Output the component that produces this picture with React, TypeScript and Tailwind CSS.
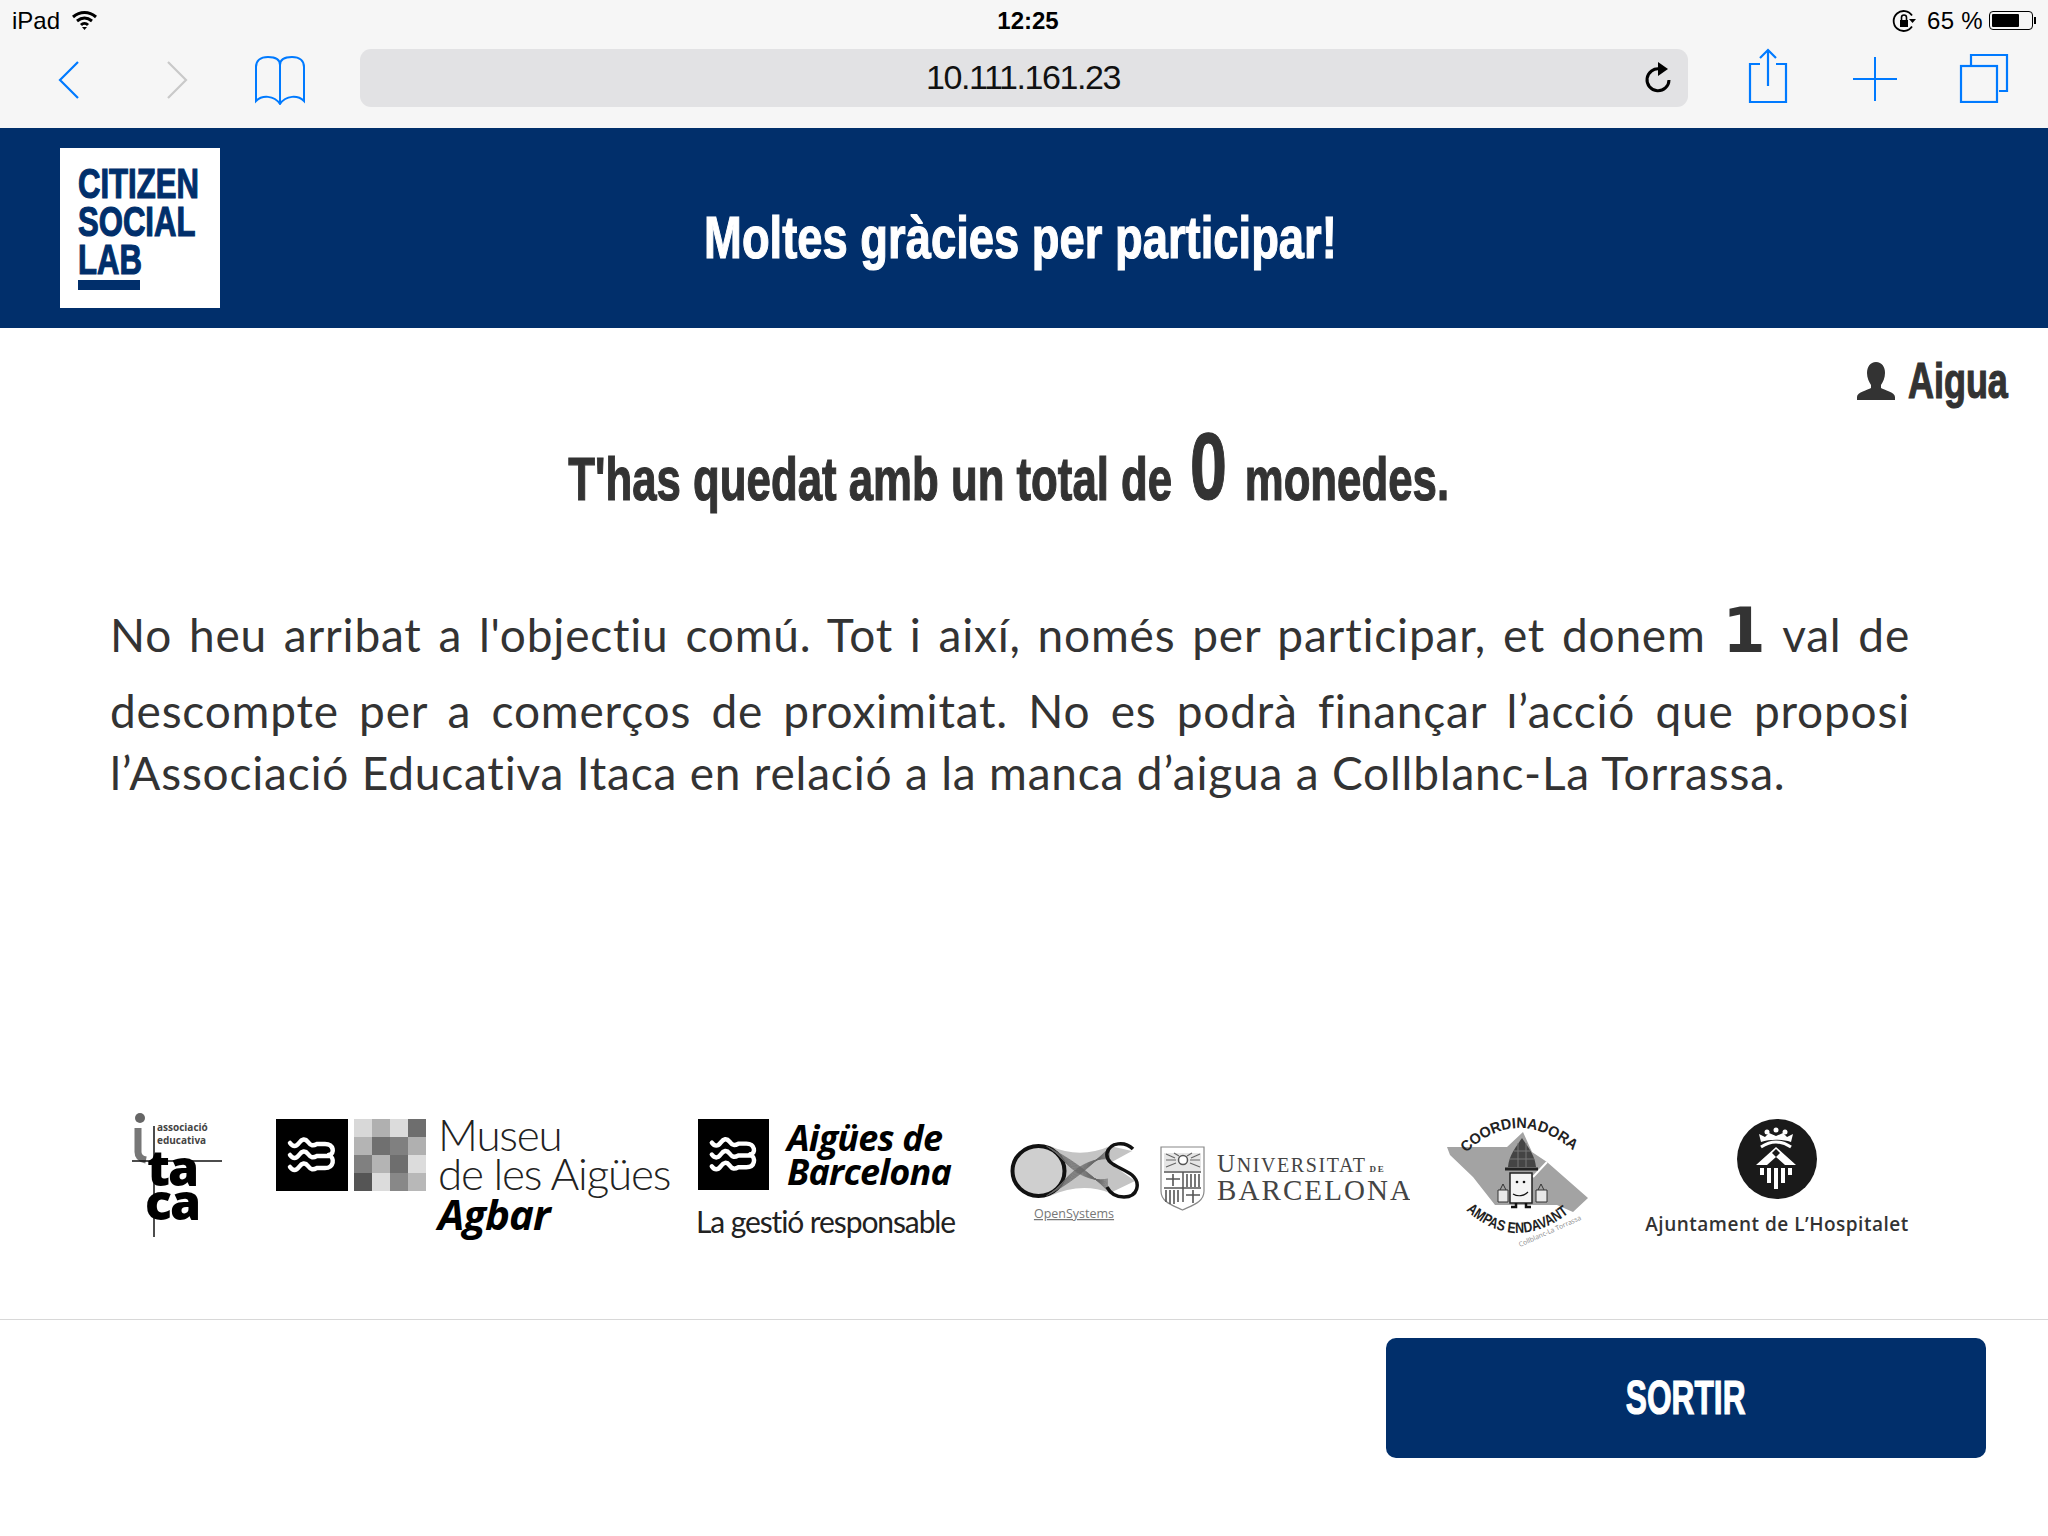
import React from "react";

const mosaic = ["#d8d8d8", "#b0b0b0", "#dcdcdc", "#6e6e6e", "#b4b4b4", "#707070", "#808080", "#b0b0b0", "#808080", "#b4b4b4", "#6e6e6e", "#dcdcdc", "#555555", "#dcdcdc", "#888888", "#b8b8b8"];

// no condensed family is installed, so the bold headings get squeezed horizontally
const heavy = "inline-block whitespace-nowrap font-['Liberation_Sans',sans-serif] font-bold [-webkit-text-stroke:1.2px_currentColor]";
const logoLine = `${heavy} origin-left scale-x-[0.74] text-[42px] leading-[38px] text-[#012f6b]`;

const meshLines = Array.from({ length: 13 }, (_, i) => i);

const WaveMark = ({ size }: { size: number }) => (
    <svg width={size} height={size} viewBox="0 0 72 72" className="bg-black shrink-0">
        <g fill="none" stroke="#fff" strokeWidth="4.500" strokeLinecap="round">
            <path d="M14 24c3 4 6 4 9 0s6-5 9-1 5 4 9 2h8c9 0 10 10 4 11" />
            <path d="M14 36c3 4 6 4 9 0s6-5 9-1 5 4 9 2h12" />
            <path d="M14 48c3 4 6 4 9 0s6-5 9-1 5 4 9 2h8c9 0 10-10 4-13" />
        </g>
    </svg>
);

const ItacaLogo = () => (
    <svg width="92" height="128" viewBox="0 0 92 128" className="shrink-0">
        <circle cx="8" cy="6" r="5" fill="#666" />
        <path d="M6 16v24c0 5 3 7 8 8" fill="none" stroke="#777" strokeWidth="7" />
        <text x="25" y="19" fontFamily="Open Sans" fontSize="10" fontWeight="700" fill="#444">associació</text>
        <text x="25" y="32" fontFamily="Open Sans" fontSize="10" fontWeight="700" fill="#444">educativa</text>
        <path d="M0 49h90" stroke="#111" strokeWidth="1.500" />
        <path d="M22 14v111" stroke="#111" strokeWidth="1.500" />
        <text x="15" y="74" fontFamily="Open Sans" fontSize="50" fontWeight="800" fill="#000" letterSpacing="-2">ta</text>
        <text x="13" y="108" fontFamily="Open Sans" fontSize="50" fontWeight="800" fill="#000" letterSpacing="-2">ca</text>
    </svg>
);

const OpenSystemsLogo = () => (
    <svg width="130" height="86" viewBox="0 0 130 86" className="shrink-0">
        <path d="M40 5C60 14 80 14 100 5L122 10 100 22 125 40 100 52C80 44 60 46 40 55z" fill="#c4c4c4" />
        <ellipse cx="28.500" cy="30" rx="26" ry="25" fill="#cfcfcf" stroke="#111" strokeWidth="4" />
        {meshLines.map((i) => (
            <path key={i} d={`M${36 + i} ${5 + i * 0.6}C58 ${16 + i} 78 ${30 + i} 98 ${50 - i}`} fill="none" stroke="#666" strokeWidth="0.600" />
        ))}
        {meshLines.map((i) => (
            <path key={i} d={`M${36 + i} ${55 - i * 0.6}C58 ${44 - i} 78 ${28 - i} 100 ${6 + i}`} fill="none" stroke="#666" strokeWidth="0.600" />
        ))}
        <path d="M123 8C115 0 100 1 97 12 95 24 112 26 122 34 131 42 128 56 114 56 106 56 100 52 97 46" fill="none" stroke="#111" strokeWidth="3.500" />
        <text x="64" y="77" textAnchor="middle" fontFamily="Open Sans" fontSize="12.500" fill="#777" textDecoration="underline">OpenSystems</text>
    </svg>
);

const BarcelonaLogo = () => (
    <svg width="250" height="68" viewBox="0 0 250 68" className="shrink-0">
        <path d="M1 2h43v44c0 11-11 14-21.500 19C12 60 1 57 1 46z" fill="#fff" stroke="#888" strokeWidth="1.200" />
        <path d="M4 8h37v18H4z" fill="#e6e6e6" />
        <circle cx="23" cy="15" r="4.500" fill="#fff" stroke="#555" strokeWidth="1.500" />
        <path d="M6 9l9 4M6 15h10M6 22l10-4M40 9l-9 4M40 15H30M40 22l-10-4M14 8l5 3M32 8l-5 3" stroke="#666" strokeWidth="1.200" />
        <path d="M4 27h37M4 43h37M23 27v30" stroke="#555" strokeWidth="1.500" />
        <path d="M6 34h14M13 29v12M27 29v13M31 29v13M35 29v13M39 29v13M6 45v12M10 45v14M14 45v14M18 45v12M26 50h14M33 45v13" stroke="#555" strokeWidth="1.600" />
        <text x="57" y="27" fontFamily="Liberation Serif" fontSize="25" fill="#444" letterSpacing="1.600">U<tspan fontSize="20">NIVERSITAT</tspan><tspan fontSize="9" dx="3" fontWeight="700">DE</tspan></text>
        <text x="57" y="55" fontFamily="Liberation Serif" fontSize="29" fill="#444" letterSpacing="2.100">BARCELONA</text>
    </svg>
);

const CoordinadoraLogo = () => (
    <svg width="146" height="134" viewBox="0 0 146 134" className="shrink-0">
        <path d="M1 32l60 0 16-15 9 20 15 10 41 36-15 14-16-7H49L27 62 4 40z" fill="#a3a3a3" />
        <path d="M101 47L87 62" stroke="#fff" strokeWidth="2" />
        <path id="coord-top" d="M20 38Q72-12 130 38" fill="none" />
        <text fontFamily="Liberation Sans" fontSize="15" fontWeight="700" fill="#222">
            <textPath href="#coord-top" textLength="120" lengthAdjust="spacingAndGlyphs">COORDINADORA</textPath>
        </text>
        <path d="M76 23C70 32 63 40 62 52H90C89 40 82 32 76 23z" fill="#444" />
        <path d="M68 36h16M64 44h24M72 28v24M80 28v24" stroke="#777" strokeWidth="1" />
        <path d="M59 54h33" stroke="#222" strokeWidth="3" />
        <path d="M64 58h22v30H64z" fill="#f4f4f4" stroke="#222" strokeWidth="1.500" />
        <circle cx="71" cy="67" r="1.300" fill="#111" />
        <circle cx="78" cy="67" r="1.300" fill="#111" />
        <path d="M67 79c5 3 11 2 15-2" fill="none" stroke="#111" strokeWidth="1.200" />
        <path d="M52 75h10v12H52zM90 75h11v12H90z" fill="#e8e8e8" stroke="#333" />
        <path d="M54 75l3-6 3 6M92 75l3-6 3 6" fill="none" stroke="#333" />
        <path d="M70 88v4h-5M80 88v4h5" fill="none" stroke="#111" strokeWidth="2.500" />
        <path id="coord-bottom" d="M20 95Q70 140 124 97" fill="none" />
        <text fontFamily="Liberation Sans" fontSize="15" fontWeight="700" fill="#222">
            <textPath href="#coord-bottom" textLength="114" lengthAdjust="spacingAndGlyphs">AMPAS ENDAVANT</textPath>
        </text>
        <text transform="translate(74 132) rotate(-24)" fontFamily="Open Sans" fontSize="6.800" fill="#888">Collblanc-La Torrassa</text>
    </svg>
);

const HospitaletMark = () => (
    <svg width="80" height="80" viewBox="0 0 80 80" className="shrink-0">
        <circle cx="40" cy="40" r="40" fill="#1a1a1a" />
        <g fill="#fff">
            <path d="M22 15l6 3 4-4 7 3 7-3 4 4 6-3-2 8c-9-3-21-3-30 0z" />
            <circle cx="30" cy="13" r="2.500" />
            <circle cx="39" cy="11" r="2.500" />
            <circle cx="48" cy="13" r="2.500" />
            <path d="M39 28L19 46h11l9-8 9 8h11z" />
        </g>
        <path d="M24 28Q39 18 54 28" fill="none" stroke="#fff" strokeWidth="3" />
        <path d="M39 30l-4 4 4 4 4-4z" fill="#1a1a1a" />
        <path d="M25 49v7M32 49v15M39 49v21M46 49v15M53 49v7" stroke="#fff" strokeWidth="4" />
    </svg>
);

const App: React.FC = () => {
    return (
        <div className="w-[2048px] h-[1536px] bg-white flex flex-col overflow-hidden font-['Liberation_Sans',sans-serif]">
            {/* Safari chrome */}
            <div className="h-[128px] bg-[#f6f6f6] flex flex-col shrink-0">
                <div className="h-[41px] grid grid-cols-3 items-center px-3 text-[24px] text-black">
                    <div className="flex items-center gap-3">
                        <span>iPad</span>
                        <svg width="25" height="20" viewBox="0 0 25 20">
                            <path d="M1 6c7-6 16-6 23 0M5 10c5-4 10-4 15 0M9 14c2-2 5-2 7 0" fill="none" stroke="#000" strokeWidth="3" />
                            <path d="M10 16l2.500 3 2.500-3z" fill="#000" />
                        </svg>
                    </div>
                    <div className="text-center font-bold text-[24px] pl-2">12:25</div>
                    <div className="flex items-center justify-end">
                        <svg width="24" height="24" viewBox="0 0 24 24" className="mr-[11px]">
                            <path d="M20 6.500a10 10 0 1 0 0 11" fill="none" stroke="#000" strokeWidth="1.800" />
                            <rect x="8" y="11" width="8" height="7" fill="#000" />
                            <path d="M9.500 11V8.500a2.500 2.500 0 0 1 5 0V11" fill="none" stroke="#000" strokeWidth="1.600" />
                            <path d="M17 10h7l-3.500 4z" fill="#000" />
                        </svg>
                        <span className="tracking-[0.3px]">65 %</span>
                        <div className="ml-[6px] flex items-center">
                            <div className="w-[44px] h-[19px] rounded-[4px] border border-black p-[2px]">
                                <div className="w-[27px] h-full bg-black rounded-[1px]" />
                            </div>
                            <div className="w-[2px] h-[7px] bg-black ml-[1px]" />
                        </div>
                    </div>
                </div>
                <div className="flex items-start flex-1">
                    <svg width="22" height="38" viewBox="0 0 22 38" className="ml-[58px] mt-[20px]">
                        <path d="M20 1L2 19l18 18" fill="none" stroke="#007aff" strokeWidth="2.200" />
                    </svg>
                    <svg width="22" height="38" viewBox="0 0 22 38" className="ml-[86px] mt-[20px]">
                        <path d="M2 1l18 18L2 37" fill="none" stroke="#c9c9c9" strokeWidth="2.200" />
                    </svg>
                    <svg width="52" height="50" viewBox="0 0 52 50" className="ml-[66px] mt-[14px]">
                        <path d="M26 10C26 4 20 2 14 2 6 2 2 6 2 12v34c6-6 18-6 24 3 6-9 18-9 24-3V12c0-6-4-10-12-10-6 0-12 2-12 8v39" fill="none" stroke="#007aff" strokeWidth="2" />
                    </svg>
                    <div className="ml-[54px] mt-[8px] w-[1328px] h-[58px] rounded-[11px] bg-[#e2e2e4] flex items-center justify-center relative">
                        <span className="text-[34px] text-[#111] tracking-[-1.400px] -mt-[2px] -ml-[2px]">10.111.161.23</span>
                        <svg width="30" height="34" viewBox="0 0 30 34" className="absolute right-[15px] top-[12px]">
                            <path d="M17 8A11 11 0 1 0 26 19" fill="none" stroke="#000" strokeWidth="3" />
                            <path d="M15 1l10 7-10 7z" fill="#000" />
                        </svg>
                    </div>
                    <svg width="40" height="56" viewBox="0 0 40 56" className="ml-[60px] mt-[7px]">
                        <path d="M12 16H2v38h36V16H28M20 38V2M12 10l8-8 8 8" fill="none" stroke="#007aff" strokeWidth="2.200" />
                    </svg>
                    <svg width="44" height="44" viewBox="0 0 44 44" className="ml-[65px] mt-[16px]">
                        <path d="M22 0v44M0 22h44" fill="none" stroke="#007aff" strokeWidth="2" />
                    </svg>
                    <svg width="50" height="50" viewBox="0 0 50 50" className="ml-[62px] mt-[12px]">
                        <path d="M12 12V2h36v36h-8" fill="none" stroke="#007aff" strokeWidth="2.200" />
                        <rect x="2" y="13" width="36" height="36" fill="none" stroke="#007aff" strokeWidth="2.200" />
                    </svg>
                </div>
            </div>

            {/* Header */}
            <div className="h-[200px] bg-[#012f6b] flex items-center shrink-0 pl-[60px]">
                <div className="w-[160px] h-[160px] bg-white pl-[18px] pt-[17px] shrink-0 flex flex-col items-start">
                    <div className={logoLine}>CITIZEN</div>
                    <div className={logoLine}>SOCIAL</div>
                    <div className={logoLine}>LAB</div>
                    <div className="w-[62px] h-[10px] bg-[#012f6b] mt-[1px]" />
                </div>
                <div className="flex-1 text-center pr-[228px] pt-[20px]">
                    <h1 className={`${heavy} scale-x-[0.756] text-[60px] text-white`}>Moltes gràcies per participar!</h1>
                </div>
            </div>

            {/* Body */}
            <div className="flex justify-end items-center pr-[40px] pt-[17px] h-[88px] shrink-0">
                <svg width="38" height="38" viewBox="0 0 38 38" className="-mr-[26px]">
                    <path d="M19 0c6 0 9 5 9 11 0 5-2 9-4 12v3c3 2 14 4 14 9v3H0v-3c0-5 11-7 14-9v-3c-2-3-4-7-4-12C10 5 13 0 19 0z" fill="#333" />
                </svg>
                <span className={`${heavy} origin-right scale-x-[0.72] text-[50px] leading-none text-[#333]`}>Aigua</span>
            </div>

            <div className="text-center pr-[30px] mt-[5px] h-[86px]">
                <h2 className={`${heavy} scale-x-[0.706] text-[62px] text-[#333] leading-[84px]`}>
                    T'has quedat amb un total de <span className="text-[94px] leading-none mx-2 relative -top-[1px]">0</span> monedes.
                </h2>
            </div>

            <p className="mt-[75px] ml-[110px] w-[1800px] text-[46px] tracking-[0.8px] leading-[62px] text-[#333] text-justify font-['Lato',sans-serif]">
                No heu arribat a l'objectiu comú. Tot i així, només per participar, et donem{" "}
                <span className="text-[62px] font-['DejaVu_Sans',sans-serif] font-bold leading-[98px]">1</span> val de descompte per a comerços de proximitat. No es podrà finançar l’acció que proposi l’Associació Educativa Itaca en relació a la manca d’aigua a Collblanc-La Torrassa.
            </p>

            <div className="flex-1" />

            {/* Logos */}
            <div className="flex items-start pl-[132px] h-[140px] shrink-0">
                <div className="mt-[2px]"><ItacaLogo /></div>
                <div className="ml-[52px] mt-[9px] flex">
                    <WaveMark size={72} />
                    <div className="grid grid-cols-4 w-[72px] h-[72px] ml-[6px] shrink-0">
                        {mosaic.map((c, i) => (
                            <div key={i} style={{ backgroundColor: c }} />
                        ))}
                    </div>
                    <div className="ml-[12px] w-[240px] -mt-[4px] font-['Lato',sans-serif] text-[#222]">
                        <div className="text-[44px] leading-[39px] font-light tracking-[-1.200px] whitespace-nowrap">Museu</div>
                        <div className="text-[44px] leading-[39px] font-light tracking-[-1.200px] whitespace-nowrap">de les Aigües</div>
                        <div className="text-[42px] leading-[42px] font-bold italic text-black tracking-[-1px] font-['Open_Sans',sans-serif]">Agbar</div>
                    </div>
                </div>
                <div className="ml-[18px] mt-[9px] w-[262px] shrink-0">
                    <div className="flex items-center pl-[2px]">
                        <WaveMark size={71} />
                        <div className="ml-[18px] font-['Open_Sans',sans-serif] font-bold italic text-black text-[36px] leading-[34px] tracking-[-0.800px] whitespace-nowrap">
                            <div>Aigües de</div>
                            <div>Barcelona</div>
                        </div>
                    </div>
                    <div className="mt-[13px] font-['Lato',sans-serif] text-[30px] leading-[36px] tracking-[-1.100px] text-[#222] whitespace-nowrap">La gestió responsable</div>
                </div>
                <div className="ml-[52px] mt-[31px]"><OpenSystemsLogo /></div>
                <div className="ml-[20px] mt-[35px]"><BarcelonaLogo /></div>
                <div className="ml-[36px] mt-[5px]"><CoordinadoraLogo /></div>
                <div className="ml-[51px] mt-[9px] flex flex-col items-center w-[268px] shrink-0">
                    <HospitaletMark />
                    <div className="mt-[11px] text-[19px] font-semibold font-['Open_Sans',sans-serif] text-[#333] tracking-[0.500px] whitespace-nowrap">Ajuntament de L’Hospitalet</div>
                </div>
            </div>

            {/* Footer */}
            <div className="mt-[69px] border-t border-[#d8d8d8] h-[217px] shrink-0 flex justify-end pr-[62px] pt-[18px]">
                <button className="w-[600px] h-[120px] bg-[#012f6b] rounded-[10px] text-white">
                    <span className={`${heavy} scale-x-[0.66] text-[48px]`}>SORTIR</span>
                </button>
            </div>
        </div>
    );
};

export default App;
